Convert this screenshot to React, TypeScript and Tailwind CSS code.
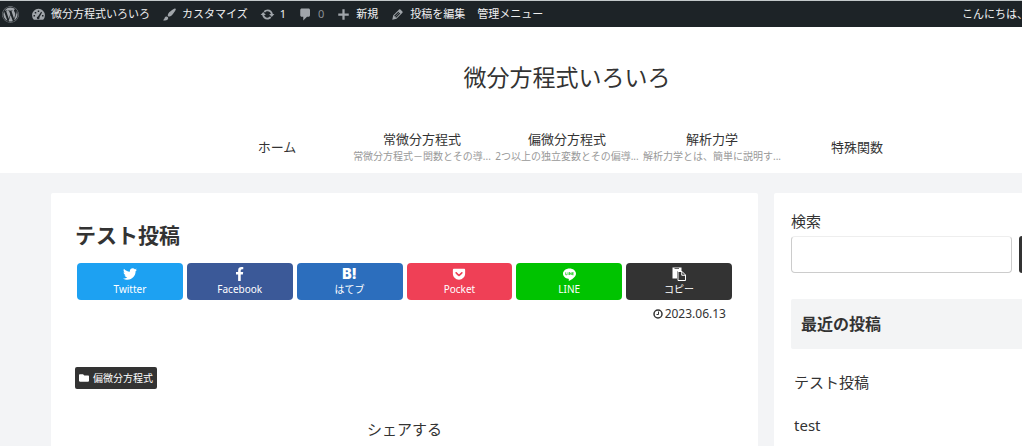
import React from "react";
import { FaFolder, FaGetPocket, FaTwitter, FaWordpress } from "react-icons/fa";

interface AdminIconProps {
  path: string;
}

const AdminIcon = ({ path }: AdminIconProps) => (
  <svg viewBox="0 0 20 20" className="size-[15px] shrink-0 fill-[#a0a5aa]" fillRule="evenodd" aria-hidden="true">
    <path d={path} />
  </svg>
);

const icons = {
  dashboard:
    "M3.8 17h12.4A8.6 8.6 0 1 0 3.8 17zM9 4.5h2v2H9zM5 6.5h2v2H5zM13.5 6.2l1.2 1-3.5 6.3a1.8 1.8 0 1 1-1.9-.9zM3.4 10.5h2v2h-2zM14.7 10.5h2v2h-2z",
  brush:
    "M18.33 3.57s.27-.8-.31-1.36c-.53-.52-1.22-.24-1.22-.24-.61.3-5.76 3.47-7.67 5.57-.86.96-2.06 3.79-1.09 4.82.92.98 3.96-.17 4.79-1 2.06-2.06 5.21-7.17 5.5-7.79zM1.4 17.65c2.37-1.56 1.46-3.41 3.23-4.64.93-.65 2.22-.62 3.08.29.63.67.8 2.57-.16 3.46-1.57 1.45-4 1.55-6.15.89z",
  update:
    "M10.2 3.28c3.53 0 6.43 2.61 6.92 6h2.08l-3.5 4-3.5-4h2.32c-.45-1.97-2.21-3.45-4.32-3.45-1.45 0-2.73.71-3.54 1.78L4.95 5.66C6.23 4.2 8.11 3.28 10.2 3.28zm-.4 13.44c-3.52 0-6.43-2.61-6.92-6H.8l3.5-4c1.17 1.33 2.33 2.67 3.5 4H5.48c.45 1.97 2.21 3.45 4.32 3.45 1.45 0 2.73-.71 3.54-1.78l1.71 1.95c-1.28 1.46-3.15 2.38-5.25 2.38z",
  comment: "M5 2h9c1.1 0 2 .9 2 2v7c0 1.1-.9 2-2 2h-2l-5 5v-5H5c-1.1 0-2-.9-2-2V4c0-1.1.9-2 2-2z",
  plus: "M17 8.500v3h-5.500V17h-3v-5.500H3v-3h5.500V3h3v5.500z",
  edit: "M13.89 3.39l2.71 2.72c.46.46.42 1.24.03 1.64l-8.01 8.02-5.56 1.16 1.16-5.58s7.6-7.63 7.99-8.03c.39-.39 1.22-.39 1.68.07zm-2.73 2.79l-5.59 5.61 1.11 1.11 5.54-5.65zm-2.97 8.23l5.58-5.6-1.07-1.08-5.59 5.6z",
};

const adminItems = [
  { label: "微分方程式いろいろ", icon: icons.dashboard, className: "" },
  { label: "カスタマイズ", icon: icons.brush, className: "" },
  { label: "1", icon: icons.update, className: "" },
  { label: "0", icon: icons.comment, className: "text-[#8c9196]" },
  { label: "新規", icon: icons.plus, className: "" },
  { label: "投稿を編集", icon: icons.edit, className: "" },
  { label: "管理メニュー", icon: null, className: "" },
];

const navItems = [
  { label: "ホーム" },
  { label: "常微分方程式", caption: "常微分方程式－関数とその導..." },
  { label: "偏微分方程式", caption: "2つ以上の独立変数とその偏導..." },
  { label: "解析力学", caption: "解析力学とは、簡単に説明す..." },
  { label: "特殊関数" },
];

const shareItems = [
  { label: "Twitter", color: "bg-[#1da1f2]", icon: <FaTwitter /> },
  { label: "Facebook", color: "bg-[#3b5998]", icon: <FacebookIcon /> },
  {
    label: "はてブ",
    color: "bg-[#2c6ebd]",
    icon: <span className="font-['Inter'] text-[14px] leading-[14px] font-black">B!</span>,
  },
  { label: "Pocket", color: "bg-[#ef4056]", icon: <FaGetPocket /> },
  { label: "LINE", color: "bg-[#00c300]", icon: <LineIcon /> },
  { label: "コピー", color: "bg-[#333333]", icon: <CopyIcon /> },
];

function FacebookIcon() {
  return (
    <svg viewBox="0 0 1024 1664" className="h-[14px] w-[9px] fill-white" aria-hidden="true">
      <path d="M959 12v264h-157q-86 0-116 36t-30 108v189h293l-39 296h-254v759h-306v-759h-255v-296h255v-218q0-186 104-288.500t277-102.500q147 0 228 12z" />
    </svg>
  );
}

function LineIcon() {
  return (
    <svg viewBox="0 0 24 24" className="size-[13px]" aria-hidden="true">
      <path fill="#fff" d="M12 1C5.400 1 0 5.200 0 10.500c0 4.700 4.300 8.600 10 9.300 1.400.3.700 1.500.5 3.200 0 .6.400.8 1 .5C14.500 22 24 17 24 10.500 24 5.200 18.600 1 12 1z" />
      <path fill="none" stroke="#00c300" strokeWidth="1.300" d="M5 8v4.500h2.300M9.300 8v5M12 13V8l3.200 4.500V8M19.500 8.500h-2.300v4h2.300M17.200 10.500h2.300" />
    </svg>
  );
}

function CopyIcon() {
  return (
    <svg viewBox="0 0 28 28" className="size-[14px]" aria-hidden="true">
      <path fill="#fff" d="M1 1h18v7h-7l-2 2v13H1z" />
      <path fill="#333" d="M5 2.500h9v1.500H5z" />
      <path fill="none" stroke="#fff" strokeWidth="2" d="M12 9h8l7 7v11H12zM19.500 9v7.500H27" />
    </svg>
  );
}

function PostClock() {
  return (
    <svg viewBox="0 0 20 20" className="size-[10px]" fill="none" stroke="currentColor" aria-hidden="true">
      <circle cx="10" cy="10" r="8" strokeWidth="3" />
      <path strokeWidth="2" d="M11 5v6H7" />
    </svg>
  );
}

const AdminBar = () => (
  <div className="flex h-[27px] items-center gap-3 border-t border-[#c3c8ca] bg-[#1d2327] pl-[2px] text-[11px] leading-4 text-[#f0f0f1]">
    <a href="#" aria-label="WordPress" className="text-[#a0a5aa]">
      <FaWordpress className="size-[17px]" />
    </a>
    {adminItems.map((item) => (
      <a key={item.label} href="#" className={`flex items-center gap-[5px] whitespace-nowrap ${item.className}`}>
        {item.icon && <AdminIcon path={item.icon} />}
        {item.label}
      </a>
    ))}
    <a href="#" className="ml-auto w-[172px] whitespace-nowrap">
      こんにちは、
    </a>
  </div>
);

const SiteHeader = () => (
  <header className="bg-white">
    <h1 className="pt-8 text-center text-[23px] leading-9">
      <a href="#">微分方程式いろいろ</a>
    </h1>
    <nav className="mt-[23px] flex h-[55px] justify-center">
      {navItems.map((item) => (
        <a
          key={item.label}
          href="#"
          className="flex w-[145px] flex-col justify-center pt-1 text-center leading-[17px] whitespace-nowrap"
        >
          <span className="text-[13px]">{item.label}</span>
          {item.caption && <span className="text-[10px] text-[#999999]">{item.caption}</span>}
        </a>
      ))}
    </nav>
  </header>
);

const Post = () => (
  <main className="w-[707px] rounded-[2px] bg-white px-6 pt-6 pb-10">
    <h2 className="text-[21px] leading-9 font-bold">テスト投稿</h2>
    <div className="mt-[10px] grid grid-cols-6 gap-1 px-[2px]">
      {shareItems.map((item) => (
        <button
          key={item.label}
          type="button"
          className={`flex h-[37px] flex-col items-center justify-center gap-px rounded-[4px] text-[10px] leading-[14px] text-white ${item.color}`}
        >
          <span className="flex h-[14px] items-center text-[14px]">{item.icon}</span>
          {item.label}
        </button>
      ))}
    </div>
    <div className="mt-[6px] flex items-center justify-end gap-[2px] pr-2 text-[12px] leading-4">
      <PostClock />
      <time dateTime="2023-06-13">2023.06.13</time>
    </div>
    <a
      href="#"
      className="mt-[45px] inline-flex h-[22px] items-center gap-1 rounded-[2px] bg-[#333333] px-1 text-[10px] text-white"
    >
      <FaFolder className="size-[10px]" />
      偏微分方程式
    </a>
    <p className="mt-7 text-center text-[15px] leading-6">シェアする</p>
  </main>
);

const Sidebar = () => (
  <aside className="flex-1 rounded-[2px] bg-white p-4 pl-[17px]">
    <form onSubmit={(e) => e.preventDefault()}>
      <label htmlFor="search" className="block text-[15px] leading-6">
        検索
      </label>
      <div className="mt-[3px] flex gap-[7px]">
        <input
          id="search"
          type="text"
          className="h-[37px] w-[221px] rounded-[4px] border border-[#cccccc] border-t-[#eeeeee] bg-white px-2 outline-none"
        />
        <button type="submit" aria-label="検索" className="h-[37px] flex-1 rounded-[3px] bg-[#333333]" />
      </div>
    </form>
    <h3 className="mt-[26px] rounded-[2px] bg-[#f3f4f5] px-[10px] py-3 text-[16px] leading-[26px] font-bold">
      最近の投稿
    </h3>
    <ul className="mt-3 px-[3px] text-[15px] leading-[25px]">
      <li className="py-[9px]">
        <a href="#">テスト投稿</a>
      </li>
      <li className="py-[9px]">
        <a href="#">test</a>
      </li>
    </ul>
  </aside>
);

const App = () => (
  <div className="h-screen overflow-hidden bg-[#f3f4f6] font-['Noto_Sans','Noto_Sans_CJK_JP',sans-serif] text-[#333333]">
    <div className="min-w-[1134px]">
      <AdminBar />
      <SiteHeader />
      <div className="mx-auto mt-5 flex max-w-[1032px] gap-4">
        <Post />
        <Sidebar />
      </div>
    </div>
  </div>
);

export default App;
